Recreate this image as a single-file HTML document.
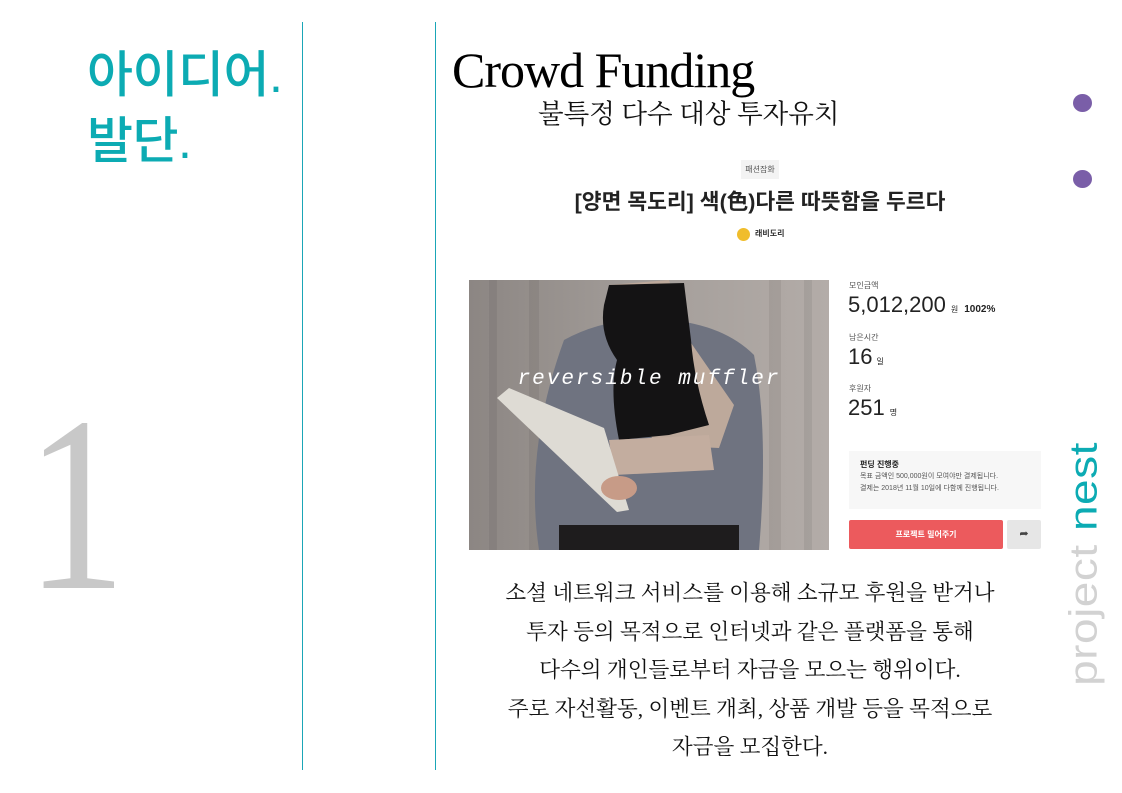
<!DOCTYPE html>
<html><head><meta charset="utf-8"><style>
*{margin:0;padding:0;box-sizing:border-box}
body{width:1122px;height:793px;background:#fff;position:relative;overflow:hidden;font-family:"Liberation Sans","Noto Sans CJK KR",sans-serif}
.a{position:absolute}
.vl{position:absolute;top:22px;width:1px;height:748px;background:#1aa6b7}
.k{font-family:"Liberation Sans","Noto Sans CJK KR",sans-serif}
.s{font-family:"Liberation Serif","Noto Serif CJK SC",serif}
</style></head><body>
<div class="vl" style="left:302px"></div>
<div class="vl" style="left:435px"></div>

<div class="a k" style="left:87px;top:42px;font-size:50px;line-height:66px;color:#0cabb3;font-weight:500;letter-spacing:-0.5px">아이디어.<br>발단.</div>

<div class="a s" style="left:26px;top:375px;font-size:250px;line-height:260px;color:#c8c8c8;transform:scaleX(0.8);transform-origin:left top">1</div>

<div class="a s" style="left:452px;top:40px;font-size:50px;line-height:60px;color:#000;letter-spacing:-1px">Crowd Funding</div>
<div class="a s" style="left:538px;top:96px;font-size:26.5px;line-height:36px;color:#111">불특정 다수 대상 투자유치</div>

<div class="a" style="left:1073px;top:94px;width:19px;height:18px;border-radius:50%;background:#7a5ea8"></div>
<div class="a" style="left:1073px;top:170px;width:19px;height:18px;border-radius:50%;background:#7a5ea8"></div>

<div class="a" style="left:1083px;top:564px;transform:translate(-50%,-50%) rotate(-90deg) scaleY(0.85);white-space:nowrap;font-size:46px;font-weight:300;line-height:48px;color:#d2d2d2;letter-spacing:0.5px">project <span style="color:#0cabb3">nest</span></div>

<!-- card -->
<div class="a k" style="left:741px;top:160px;width:38px;height:19px;background:#f3f3f3;font-size:8px;color:#555;text-align:center;line-height:19px">패션잡화</div>
<div class="a k" style="left:450px;top:187px;width:620px;text-align:center;font-size:21.5px;font-weight:bold;color:#222;line-height:30px">[양면 목도리] 색(色)다른 따뜻함을 두르다</div>
<div class="a" style="left:737px;top:228px;width:13px;height:13px;border-radius:50%;background:#f0bd2c"></div>
<div class="a k" style="left:755px;top:227px;font-size:8px;font-weight:bold;color:#333;line-height:14px">래비도리</div>

<svg class="a" style="left:469px;top:280px" width="360" height="270" viewBox="0 0 360 270">
<defs><linearGradient id="bg" x1="0" x2="1"><stop offset="0" stop-color="#8c8683"/><stop offset=".5" stop-color="#a49e9a"/><stop offset="1" stop-color="#b3aca8"/></linearGradient></defs>
<rect width="360" height="270" fill="url(#bg)"/>
<g fill="#000" opacity=".06"><rect x="20" width="8" height="270"/><rect x="60" width="10" height="270"/><rect x="300" width="12" height="270"/><rect x="335" width="8" height="270"/></g>
<path d="M95 60 Q140 35 200 40 Q255 45 285 75 Q300 150 290 270 L70 270 Q55 170 95 60Z" fill="#6f7380"/>
<rect x="90" y="245" width="180" height="25" fill="#1e1c1d"/>
<path d="M140 5 L200 0 L220 60 L265 125 L250 168 L185 165 Q175 130 150 80 L135 40Z" fill="#bda99b"/>
<path d="M140 5 L215 3 L222 60 Q225 100 240 145 L200 155 L150 160 Q140 110 148 80 Q130 55 135 25Z" fill="#141314"/>
<path d="M140 160 L240 155 L245 190 L145 195Z" fill="#c3ad9f"/>
<path d="M28 118 L40 108 L135 148 L160 230 L148 232 Z" fill="#dedbd4"/>
<ellipse cx="150" cy="208" rx="18" ry="12" fill="#c79b87"/>
<text x="180" y="104" text-anchor="middle" fill="#fff" font-family="'Liberation Mono',monospace" font-size="21" font-style="italic" letter-spacing="2">reversible muffler</text>
</svg>

<div class="a k" style="left:849px;top:280px;font-size:8px;color:#555">모인금액</div>
<div class="a k" style="left:848px;top:290px;font-size:22px;color:#222;line-height:30px">5,012,200<span style="font-size:8px;margin-left:5px">원</span><span style="font-size:10px;font-weight:bold;margin-left:6px">1002%</span></div>
<div class="a k" style="left:849px;top:332px;font-size:8px;color:#555">남은시간</div>
<div class="a k" style="left:848px;top:342px;font-size:22px;color:#222;line-height:30px">16<span style="font-size:8px;margin-left:4px">일</span></div>
<div class="a k" style="left:849px;top:383px;font-size:8px;color:#555">후원자</div>
<div class="a k" style="left:848px;top:393px;font-size:22px;color:#222;line-height:30px">251<span style="font-size:8px;margin-left:5px">명</span></div>

<div class="a k" style="left:849px;top:451px;width:192px;height:58px;background:#f7f7f7;padding:8px 0 0 11px;font-size:7px;color:#555;line-height:12px">
<div style="font-weight:bold;color:#222;font-size:8px">펀딩 진행중</div>
<div>목표 금액인 500,000원이 모여야만 결제됩니다.</div>
<div>결제는 2018년 11월 10일에 다함께 진행됩니다.</div></div>
<div class="a k" style="left:849px;top:520px;width:154px;height:29px;background:#ec5a5d;border-radius:2px;color:#fff;font-size:8px;font-weight:bold;text-align:center;line-height:29px">프로젝트 밀어주기</div>
<div class="a" style="left:1007px;top:520px;width:34px;height:29px;background:#e6e6e6;border-radius:2px;color:#444;font-size:11px;text-align:center;line-height:29px">➦</div>

<div class="a s" style="left:440px;top:574px;width:620px;text-align:center;font-size:21.5px;line-height:38.5px;color:#111">소셜 네트워크 서비스를 이용해 소규모 후원을 받거나<br>투자 등의 목적으로 인터넷과 같은 플랫폼을 통해<br>다수의 개인들로부터 자금을 모으는 행위이다.<br>주로 자선활동, 이벤트 개최, 상품 개발 등을 목적으로<br>자금을 모집한다.</div>
</body></html>
